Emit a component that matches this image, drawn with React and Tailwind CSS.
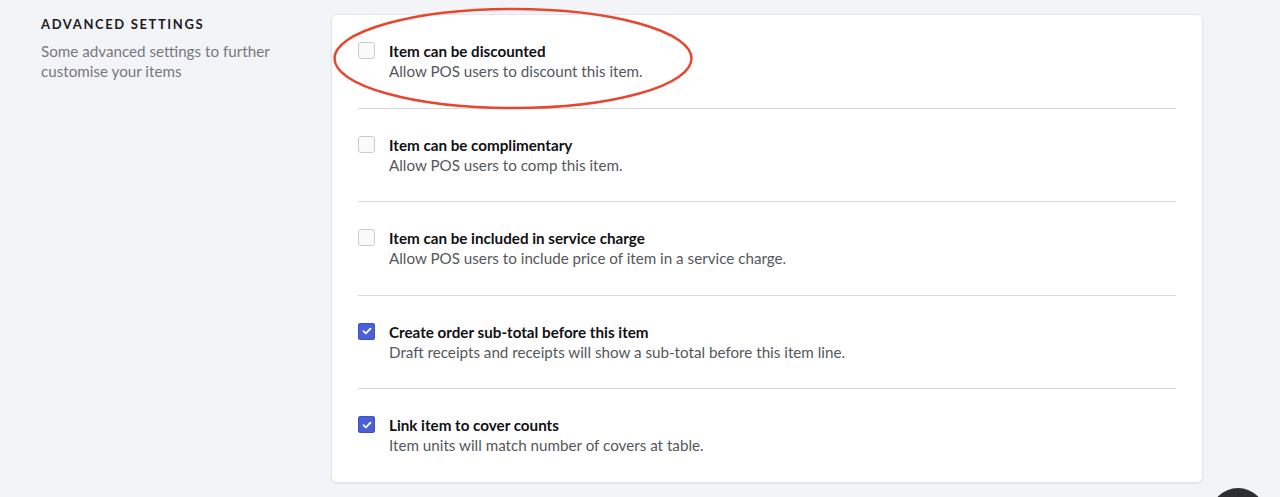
import React from "react";

const rows = [
  { title: "Item can be discounted", desc: "Allow POS users to discount this item.", checked: false },
  { title: "Item can be complimentary", desc: "Allow POS users to comp this item.", checked: false },
  { title: "Item can be included in service charge", desc: "Allow POS users to include price of item in a service charge.", checked: false },
  { title: "Create order sub-total before this item", desc: "Draft receipts and receipts will show a sub-total before this item line.", checked: true },
  { title: "Link item to cover counts", desc: "Item units will match number of covers at table.", checked: true },
];

function Checkbox({ checked }) {
  if (checked) {
    return (
      <div className="mt-[1px] flex h-[17px] w-[17px] shrink-0 items-center justify-center rounded-[3px] bg-[#4b5fd6] shadow-[inset_0_0_0_1px_#3f51c4]">
        <svg width="10" height="8" viewBox="0 0 10 8" fill="none">
          <path d="M1.5 4.2 L3.9 6.4 L8.5 1.6" stroke="white" strokeWidth="1.8" strokeLinecap="round" strokeLinejoin="round" />
        </svg>
      </div>
    );
  }
  return <div className="mt-[1px] h-[17px] w-[17px] shrink-0 rounded-[3px] border border-[#c9ccd2] bg-[#fafafa]" />;
}

export default function App() {
  return (
    <div className="relative h-[497px] w-[1280px] overflow-hidden bg-[#f3f4f8]" style={{ fontFamily: "Lato, 'Open Sans', sans-serif" }}>
      <div className="flex pl-[41px] pt-[14px]">
        <div className="w-[290px] shrink-0">
          <div className="text-[13px] font-bold leading-[20px] tracking-[0.125em] text-[#1c1c1e]">ADVANCED SETTINGS</div>
          <p className="mt-[7px] text-[15.2px] leading-[20px] text-[#76787e]">
            Some advanced settings to further
            <br />
            customise your items
          </p>
        </div>
        <div className="w-[872px] shrink-0 rounded-[6px] border border-[#e3e5ea] bg-white px-[26px] shadow-[0_1px_2px_rgba(0,0,0,0.06)]">
          {rows.map((r, i) => (
            <div
              key={i}
              className={`flex gap-[14px] pt-[26px] pb-[26px] ${i < rows.length - 1 ? "border-b border-[#d9dbdf]" : ""}`}
            >
              <Checkbox checked={r.checked} />
              <div>
                <div className="text-[15.2px] font-bold leading-[20px] text-[#111114]">{r.title}</div>
                <div className="text-[15.2px] leading-[20.5px] text-[#55575c]">{r.desc}</div>
              </div>
            </div>
          ))}
        </div>
      </div>
      <svg className="pointer-events-none absolute left-0 top-0" width="1280" height="497">
        <ellipse cx="513" cy="58.5" rx="178.5" ry="49.5" fill="none" stroke="#e8472f" strokeWidth="2.5" />
      </svg>
      <div className="absolute left-[1210px] top-[488px] h-[56px] w-[56px] rounded-full bg-[#2e2e30]" />
    </div>
  );
}
